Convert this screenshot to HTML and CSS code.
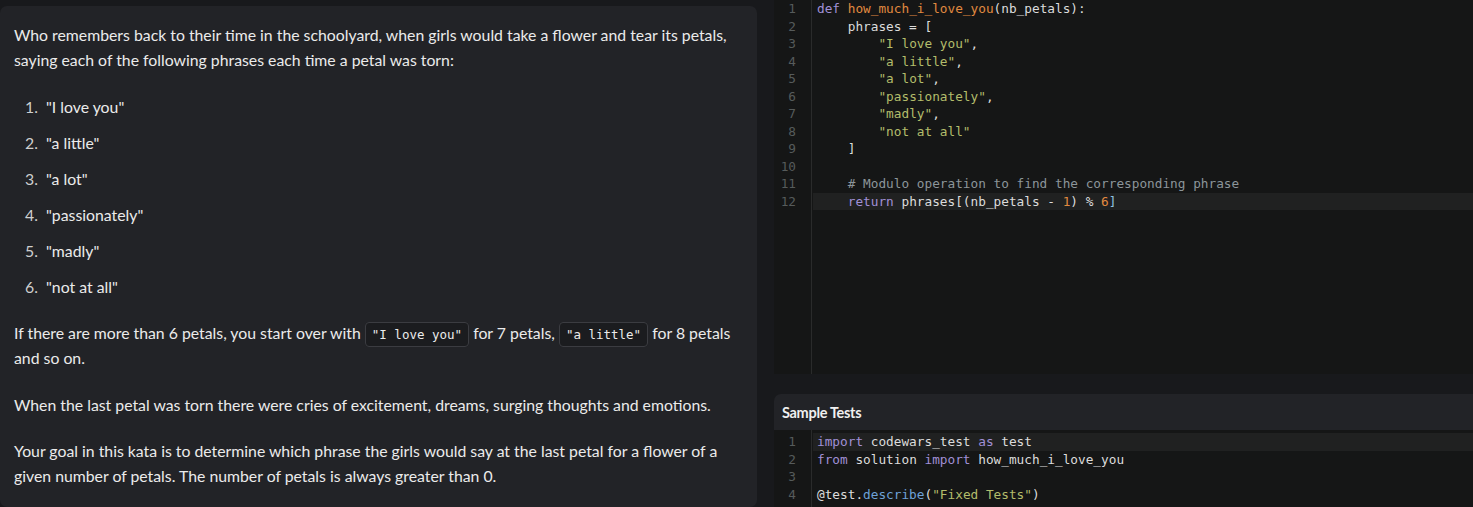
FILE: index.html
```html
<!DOCTYPE html>
<html lang="en">
<head>
<meta charset="utf-8">
<title>Kata</title>
<link rel="stylesheet" href="styles.css">
</head>
<body>
<div class="layout">
  <section class="description">
    <p>Who remembers back to their time in the schoolyard, when girls would take a flower and tear its petals, saying each of the following phrases each time a petal was torn:</p>
    <ol class="phrases">
      <li>"I love you"</li>
      <li>"a little"</li>
      <li>"a lot"</li>
      <li>"passionately"</li>
      <li>"madly"</li>
      <li>"not at all"</li>
    </ol>
    <p>If there are more than 6 petals, you start over with <code class="inline">"I love you"</code> for 7 petals, <code class="inline">"a little"</code> for 8 petals and so on.</p>
    <p>When the last petal was torn there were cries of excitement, dreams, surging thoughts and emotions.</p>
    <p>Your goal in this kata is to determine which phrase the girls would say at the last petal for a flower of a given number of petals. The number of petals is always greater than 0.</p>
  </section>
  <div class="right">
    <div class="editor main-editor">
      <div class="gutter">
        <span>1</span><span>2</span><span>3</span><span>4</span><span>5</span><span>6</span><span>7</span><span>8</span><span>9</span><span>10</span><span>11</span><span>12</span>
      </div>
      <div class="code">
        <div class="line"><span class="kw">def</span> <span class="fn">how_much_i_love_you</span>(nb_petals):</div>
        <div class="line">    phrases = [</div>
        <div class="line">        <span class="str">"I love you"</span>,</div>
        <div class="line">        <span class="str">"a little"</span>,</div>
        <div class="line">        <span class="str">"a lot"</span>,</div>
        <div class="line">        <span class="str">"passionately"</span>,</div>
        <div class="line">        <span class="str">"madly"</span>,</div>
        <div class="line">        <span class="str">"not at all"</span></div>
        <div class="line">    ]</div>
        <div class="line"> </div>
        <div class="line">    <span class="cm"># Modulo operation to find the corresponding phrase</span></div>
        <div class="line active">    <span class="kw">return</span> phrases[(nb_petals - <span class="num">1</span>) % <span class="num">6</span><span class="br">]</span></div>
      </div>
    </div>
    <div class="tests">
      <div class="tests-header">Sample Tests</div>
      <div class="editor test-editor">
        <div class="gutter">
          <span>1</span><span>2</span><span>3</span><span>4</span>
        </div>
        <div class="code">
          <div class="line active"><span class="kw">import</span> codewars_test <span class="kw">as</span> test</div>
          <div class="line"><span class="kw">from</span> solution <span class="kw">import</span> how_much_i_love_you</div>
          <div class="line"> </div>
          <div class="line">@test.<span class="call">describe</span>(<span class="str">"Fixed Tests"</span>)</div>
        </div>
      </div>
    </div>
  </div>
</div>
</body>
</html>
```
FILE: styles.css
```css
html, body {
  margin: 0;
  padding: 0;
  background: #18191c;
  height: 100%;
  overflow: hidden;
}

.layout {
  display: flex;
  gap: 17px;
  height: 507px;
}

.description {
  width: 757px;
  flex: none;
  box-sizing: border-box;
  margin-top: 6px;
  background: #222327;
  border-radius: 7px;
  padding: 16px 14px 0 14px;
  font-family: Lato, "Open Sans", sans-serif;
  font-size: 15.8px;
  line-height: 25px;
  color: #ebebeb;
}

.description p {
  margin: 0 0 21.5px 0;
}

.phrases {
  list-style: none;
  counter-reset: item;
  margin: 0 0 21.5px 0;
  padding-left: 11px;
}

.phrases li {
  counter-increment: item;
  margin-bottom: 11px;
}

.phrases li::before {
  content: counter(item) ".";
  display: inline-block;
  width: 21px;
  color: #cfcfcf;
}

.inline {
  font-family: "DejaVu Sans Mono", monospace;
  font-size: 12.5px;
  line-height: 1;
  background: #1b1c1f;
  border: 1px solid #3b3c41;
  border-radius: 4px;
  padding: 4px 6px;
  color: #ebebeb;
}

.right {
  flex: 1;
  display: flex;
  flex-direction: column;
  min-width: 0;
}

.editor {
  display: flex;
  background: #151616;
  font-family: "DejaVu Sans Mono", monospace;
  font-size: 12.75px;
  line-height: 17.5px;
  color: #dcdcdc;
}

.main-editor {
  height: 374px;
  flex: none;
}

.gutter {
  width: 38px;
  flex: none;
  box-sizing: border-box;
  border-right: 1px solid #2a2b2b;
  padding-right: 15px;
  display: flex;
  flex-direction: column;
  align-items: flex-end;
  color: #565b5b;
}

.code {
  flex: 1;
  padding-left: 1px;
  min-width: 0;
}

.line {
  white-space: pre;
  padding-left: 4px;
  height: 17.5px;
}

.line.active {
  background: #202121;
}

.kw { color: #a190d6; }
.fn { color: #e08a40; }
.str { color: #b3bd6b; }
.num { color: #e08a40; }
.cm { color: #8c959a; }
.call { color: #6ea2d8; }
.br { color: #8fc0e0; }

.tests {
  margin-top: 20px;
  flex: 1;
  display: flex;
  flex-direction: column;
  border-top-left-radius: 7px;
  overflow: hidden;
}

.tests-header {
  height: 36px;
  flex: none;
  background: #222327;
  padding-left: 8px;
  display: flex;
  align-items: center;
  font-family: Lato, "Open Sans", sans-serif;
  font-weight: 700;
  font-size: 14.5px;
  color: #f0f0f0;
  letter-spacing: -0.3px;
}

.test-editor {
  flex: 1;
}

.test-editor .gutter,
.test-editor .code {
  padding-top: 3px;
}
```
